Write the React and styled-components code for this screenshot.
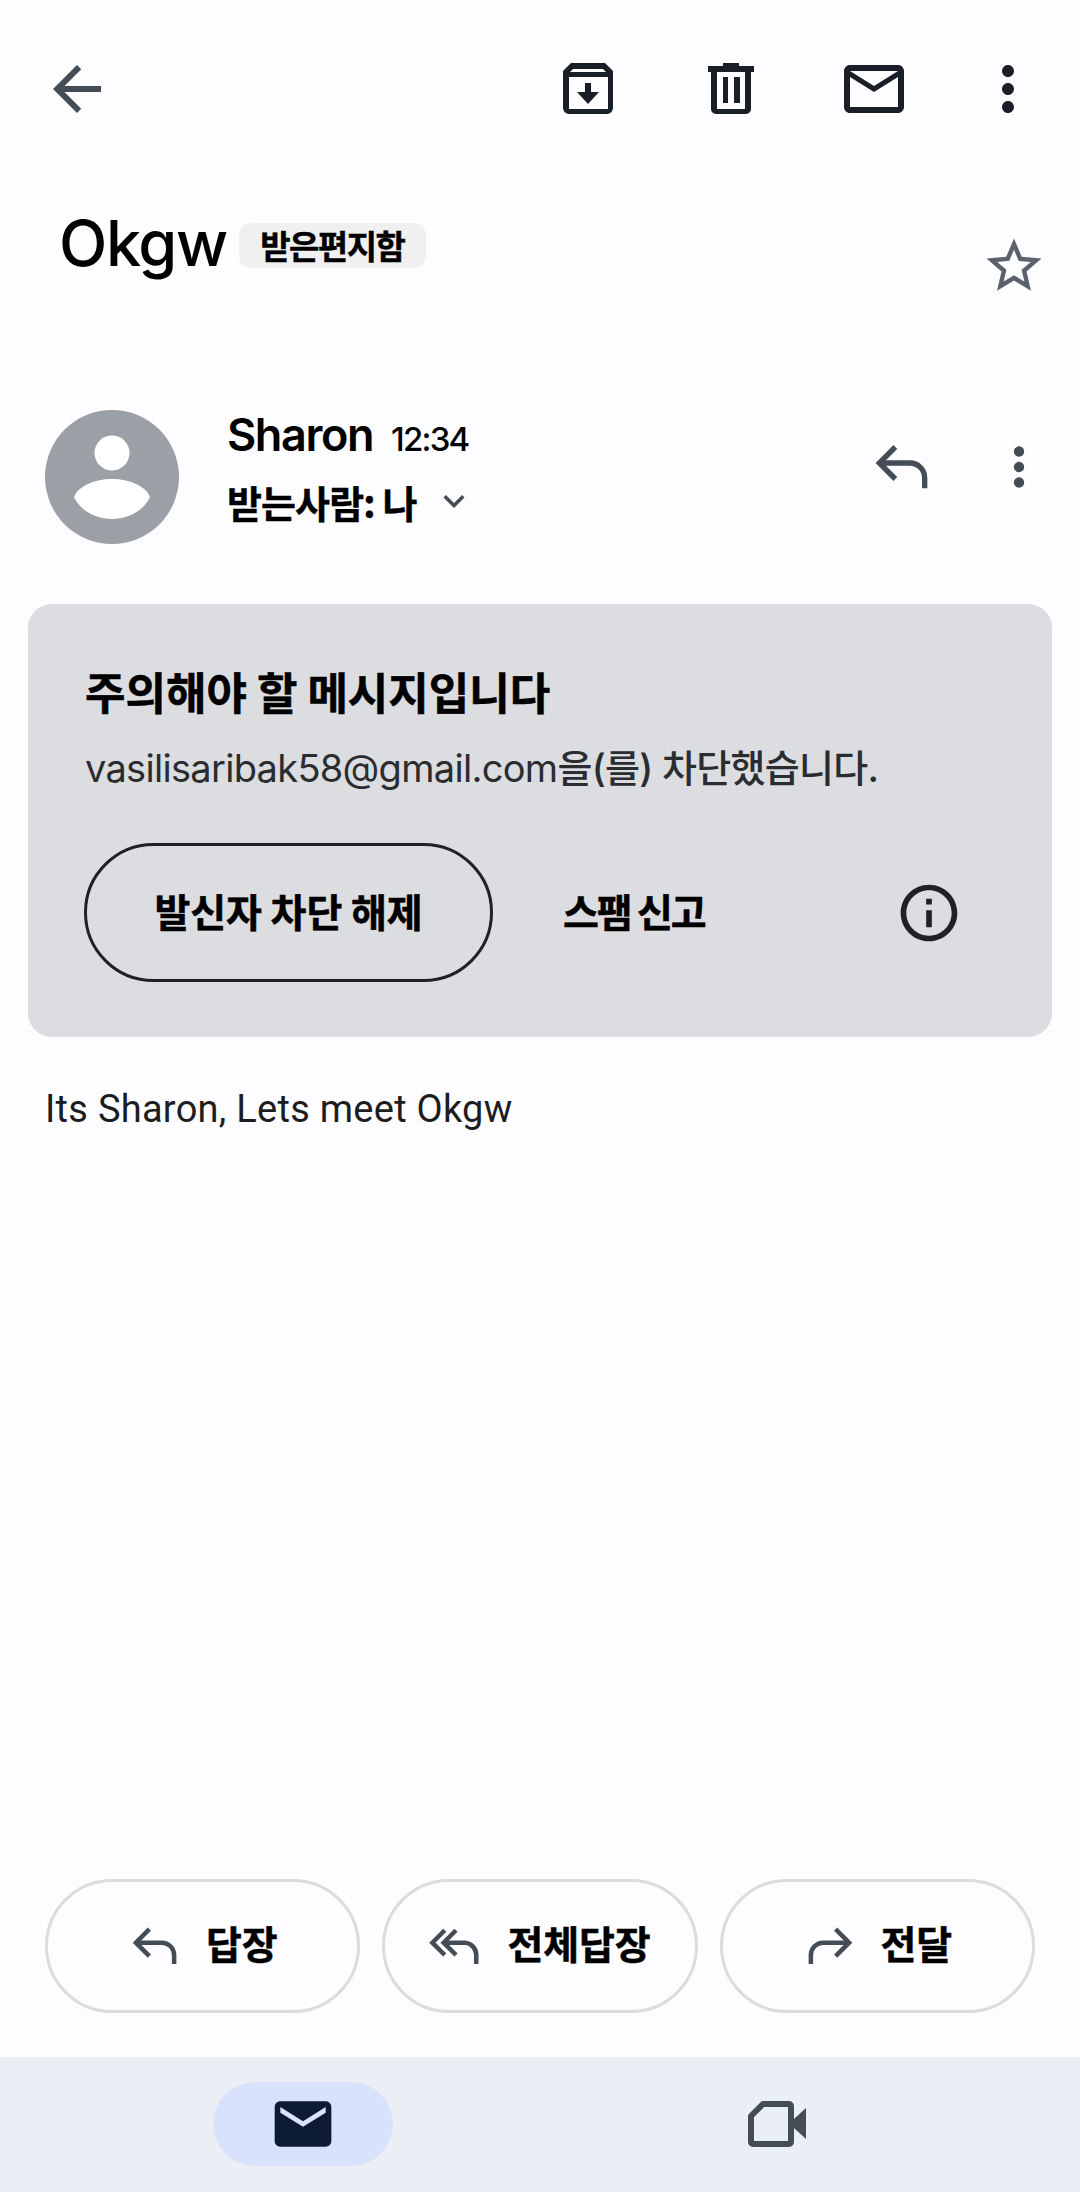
import React from "react";
import styled, { createGlobalStyle } from "styled-components";
import {
  MdArrowBack,
  MdMailOutline,
  MdMoreVert,
  MdStarBorder,
  MdKeyboardArrowDown,
  MdInfoOutline,
  MdMail,
} from "react-icons/md";

const GlobalStyle = createGlobalStyle`
  html, body {
    margin: 0;
    padding: 0;
    background: #fdfcff;
  }
  * {
    box-sizing: border-box;
  }
`;

const KR = `"Noto Sans CJK KR", sans-serif`;

const Page = styled.div`
  width: 1080px;
  height: 2192px;
  display: flex;
  flex-direction: column;
  background: #fdfcff;
  font-family: ${KR};
  color: #000;
  overflow: hidden;
`;

const TopBar = styled.div`
  display: flex;
  align-items: center;
  height: 72px;
  margin-top: 53px;
  padding: 0 45px 0 41px;
`;

const IconSlot = styled.div`
  width: ${(p) => p.$w || 72}px;
  height: 72px;
  flex-shrink: 0;
  display: flex;
  align-items: center;
  justify-content: center;
  color: ${(p) => p.$color || "#1a1f27"};
  svg {
    flex-shrink: 0;
  }
`;

const TopActions = styled.div`
  margin-left: auto;
  display: flex;
  gap: 71px;
`;

const SubjectRow = styled.div`
  display: flex;
  align-items: flex-start;
  height: 100px;
  margin-top: 90px;
  padding: 0 30px 0 59px;
`;

const Subject = styled.div`
  font-family: "Inter", sans-serif;
  font-size: 63px;
  line-height: 66px;
  letter-spacing: -1.4px;
  font-weight: 500;
  margin-top: -5px;
`;

const Chip = styled.div`
  margin: 8px 0 0 12px;
  height: 45px;
  width: 187px;
  background: #f0f0f0;
  border-radius: 12px;
  font-size: 33px;
  font-weight: 700;
  line-height: 45px;
  text-align: center;
  letter-spacing: -1.5px;
  -webkit-text-stroke: 0.4px #000;
`;

const StarSlot = styled(IconSlot)`
  margin: 15px 0 0 auto;
  color: #5b626b;
`;

const SenderRow = styled.div`
  display: flex;
  align-items: center;
  height: 134px;
  margin-top: 95px;
  padding: 0 34px 0 45px;
`;

const Avatar = styled.svg`
  width: 134px;
  height: 134px;
  flex-shrink: 0;
`;

const SenderInfo = styled.div`
  margin: 0 0 18px 48px;
  display: flex;
  flex-direction: column;
  gap: 14px;
`;

const NameLine = styled.div`
  display: flex;
  align-items: baseline;
  gap: 18px;
  height: 52px;
`;

const SenderName = styled.span`
  font-family: "Inter", sans-serif;
  font-size: 45px;
  font-weight: 600;
  letter-spacing: -1.4px;
  line-height: 52px;
`;

const Time = styled.span`
  font-family: "Inter", sans-serif;
  font-size: 33px;
  font-weight: 500;
  letter-spacing: -1.8px;
`;

const ToLine = styled.div`
  display: flex;
  align-items: center;
  height: 52px;
  font-size: 38px;
  font-weight: 700;
  letter-spacing: -0.9px;
  -webkit-text-stroke: 0.4px #000;
`;

const ChevronSlot = styled.span`
  display: flex;
  margin-left: 17px;
  color: #444c56;
`;

const SenderActions = styled.div`
  margin-left: auto;
  margin-bottom: 20px;
  display: flex;
  align-items: center;
  gap: 54px;
`;

const WarningCard = styled.div`
  margin: 60px 28px 0;
  height: 433px;
  background: #dcdde0;
  border-radius: 24px;
  padding: 55px 56px 0 57px;
`;

const WarningTitle = styled.div`
  font-size: 44px;
  line-height: 64px;
  font-weight: 700;
  -webkit-text-stroke: 0.5px #000;
`;

const WarningText = styled.div`
  margin-top: 19px;
  font-size: 38px;
  line-height: 52px;
  color: #2a2c30;
  font-family: "Inter", ${KR};
  letter-spacing: -0.7px;
  white-space: nowrap;
`;

const KoreanPart = styled.span`
  font-weight: 500;
`;

const WarningActions = styled.div`
  margin-top: 49px;
  margin-left: -1px;
  display: flex;
  align-items: center;
`;

const OutlineButton = styled.div`
  width: 409px;
  height: 139px;
  border: 3px solid #1f2126;
  border-radius: 70px;
  display: flex;
  align-items: center;
  justify-content: center;
`;

const ActionLabel = styled.span`
  font-size: 39px;
  font-weight: 700;
  margin-top: -6px;
  letter-spacing: ${(p) => p.$spacing || "-0.1px"};
  white-space: nowrap;
  -webkit-text-stroke: 0.5px #000;
`;

const SpamLabel = styled(ActionLabel)`
  margin-left: 70px;
`;

const InfoSlot = styled(IconSlot)`
  margin-left: 189px;
  color: #1f2126;
`;

const BodyText = styled.div`
  margin: 46px 45px 0;
  font-family: "Roboto", sans-serif;
  font-size: 38px;
  line-height: 52px;
  letter-spacing: 0.27px;
  color: #1c1d20;
`;

const ReplyRow = styled.div`
  margin: auto 45px 0;
  display: flex;
  gap: 22px;
`;

const ReplyButton = styled.div`
  flex: 1;
  height: 134px;
  border: 3px solid #dcdcde;
  border-radius: 67px;
  display: flex;
  align-items: center;
  justify-content: center;
  gap: 21px;
`;

const ReplyLabel = styled(ActionLabel)`
  margin-top: -8px;
  margin-left: 3px;
`;

const LineIcon = styled.svg`
  width: ${(p) => p.$size}px;
  height: ${(p) => p.$size}px;
  flex-shrink: 0;
  fill: none;
  stroke: #444c56;
  stroke-width: 2;
`;

const BottomNav = styled.div`
  margin-top: 44px;
  height: 135px;
  background: #eaeef5;
  display: flex;
  align-items: center;
  padding: 0 0 2px 213px;
`;

const NavPill = styled.div`
  width: 180px;
  height: 84px;
  border-radius: 42px;
  background: #d8e2fb;
  display: flex;
  align-items: center;
  justify-content: center;
  color: #0c1a33;
`;

const VideoSlot = styled(IconSlot)`
  margin-left: 348px;
`;

const ReplyGlyph = ({ size = 64 }) => (
  <LineIcon $size={size} viewBox="0 0 24 24">
    <path d="M9.5 4.5 3.5 10.5l6 6" />
    <path d="M4 10.5h11a5.5 5.5 0 0 1 5.5 5.5v4" />
  </LineIcon>
);

const ReplyAllGlyph = ({ size = 64 }) => (
  <LineIcon $size={size} viewBox="0 0 24 24">
    <path d="M7 5 1.5 10.5 7 16" />
    <path d="M12 5 6.5 10.5 12 16" />
    <path d="M7 10.5h9a5.5 5.5 0 0 1 5 5.5v4" />
  </LineIcon>
);

const ForwardGlyph = ({ size = 64 }) => (
  <LineIcon $size={size} viewBox="0 0 24 24">
    <path d="M14.5 4.5l6 6-6 6" />
    <path d="M20 10.5H9A5.5 5.5 0 0 0 3.5 16v4" />
  </LineIcon>
);

// gmail's own archive and trash glyphs, the md set has none this close
const ArchiveGlyph = () => (
  <svg width="72" height="72" viewBox="0 0 72 72" fill="currentColor">
    <path
      fillRule="evenodd"
      d="M19 10h34l8 8v37a6 6 0 0 1-6 6H17a6 6 0 0 1-6-6V18zM21 16l-3 3h36l-3-3zM17 24v32h39V24z"
    />
    <path d="M33 30h6v9h8L36 51 25 39h8z" />
  </svg>
);

const TrashGlyph = () => (
  <svg width="72" height="72" viewBox="0 0 72 72" fill="currentColor">
    <path
      fillRule="evenodd"
      d="M28 10h16v3h15v6h-3v37a5 5 0 0 1-5 5H21a5 5 0 0 1-5-5V19h-3v-6h15zM22 19v37h28V19z"
    />
    <path d="M28 24h5v26h-5zM39 24h6v26h-6z" />
  </svg>
);

const MeetGlyph = () => (
  <svg width="60" height="48" viewBox="0 0 60 48" fill="none">
    <path
      d="M4 16 16 4h26a2 2 0 0 1 2 2v36a2 2 0 0 1-2 2H6a2 2 0 0 1-2-2z"
      stroke="#444c56"
      strokeWidth="6"
      strokeLinejoin="round"
    />
    <path d="M47 19 59 8v31L47 28z" fill="#444c56" />
  </svg>
);

const App = () => {
  return (
    <Page>
      <GlobalStyle />
      <TopBar>
        <IconSlot $color="#444c56">
          <MdArrowBack size={72} />
        </IconSlot>
        <TopActions>
          <IconSlot>
            <ArchiveGlyph />
          </IconSlot>
          <IconSlot>
            <TrashGlyph />
          </IconSlot>
          <IconSlot>
            <MdMailOutline size={72} />
          </IconSlot>
          <IconSlot $w={54}>
            <MdMoreVert size={72} />
          </IconSlot>
        </TopActions>
      </TopBar>

      <SubjectRow>
        <Subject>Okgw</Subject>
        <Chip>받은편지함</Chip>
        <StarSlot>
          <MdStarBorder size={66} />
        </StarSlot>
      </SubjectRow>

      <SenderRow>
        <Avatar viewBox="0 0 134 134">
          <circle cx="67" cy="67" r="67" fill="#9aa0a6" />
          <circle cx="67" cy="43" r="17.5" fill="#fff" />
          <path
            d="M29 87C33 76 50 69 67 69s34 7 38 18c-6 13-21 22-38 22s-32-9-38-22z"
            fill="#fff"
          />
        </Avatar>
        <SenderInfo>
          <NameLine>
            <SenderName>Sharon</SenderName>
            <Time>12:34</Time>
          </NameLine>
          <ToLine>
            받는사람: 나
            <ChevronSlot>
              <MdKeyboardArrowDown size={42} />
            </ChevronSlot>
          </ToLine>
        </SenderInfo>
        <SenderActions>
          <IconSlot $color="#444c56">
            <ReplyGlyph />
          </IconSlot>
          <IconSlot $w={54} $color="#444c56">
            <MdMoreVert size={62} />
          </IconSlot>
        </SenderActions>
      </SenderRow>

      <WarningCard>
        <WarningTitle>주의해야 할 메시지입니다</WarningTitle>
        <WarningText>
          vasilisaribak58@gmail.com<KoreanPart>을(를) 차단했습니다.</KoreanPart>
        </WarningText>
        <WarningActions>
          <OutlineButton>
            <ActionLabel>발신자 차단 해제</ActionLabel>
          </OutlineButton>
          <SpamLabel $spacing="-2.2px">스팸 신고</SpamLabel>
          <InfoSlot>
            <MdInfoOutline size={68} />
          </InfoSlot>
        </WarningActions>
      </WarningCard>

      <BodyText>Its Sharon, Lets meet Okgw</BodyText>

      <ReplyRow>
        <ReplyButton>
          <ReplyGlyph size={54} />
          <ReplyLabel>답장</ReplyLabel>
        </ReplyButton>
        <ReplyButton>
          <ReplyAllGlyph size={54} />
          <ReplyLabel>전체답장</ReplyLabel>
        </ReplyButton>
        <ReplyButton>
          <ForwardGlyph size={54} />
          <ReplyLabel>전달</ReplyLabel>
        </ReplyButton>
      </ReplyRow>

      <BottomNav>
        <NavPill>
          <MdMail size={68} />
        </NavPill>
        <VideoSlot>
          <MeetGlyph />
        </VideoSlot>
      </BottomNav>
    </Page>
  );
};

export default App;
